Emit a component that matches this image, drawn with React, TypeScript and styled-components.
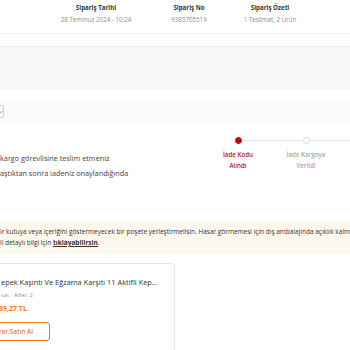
import React from 'react';
import styled, { createGlobalStyle } from 'styled-components';

const Global = createGlobalStyle`
  html, body { margin: 0; padding: 0; background: #fff; }
  body { font-family: "Open Sans", "Noto Sans", sans-serif; width: 350px; height: 350px; overflow: hidden; }
  * { box-sizing: border-box; }
`;

const Page = styled.div`
  width: 350px;
  height: 350px;
  overflow: hidden;
  display: flex;
  flex-direction: column;
  background: #fff;
`;

const Header = styled.div`
  height: 34px;
  flex: none;
  border-bottom: 1px solid #ececec;
  display: grid;
  grid-template-columns: 80px 106px 56px;
  padding: 2px 0 0 56px;
`;

const HeaderCell = styled.div`
  display: flex;
  flex-direction: column;
  align-items: center;
  white-space: nowrap;
  line-height: 11.5px;
`;

const HeaderLabel = styled.span`
  font-size: 6.2px;
  font-weight: 700;
  color: #333;
`;

const HeaderValue = styled.span`
  font-size: 6.2px;
  color: #8e8e8e;
`;

const Spacer = styled.div<{ $h: number }>`
  height: ${(p) => p.$h}px;
  flex: none;
`;

const GrayPanel = styled.div`
  height: 43px;
  flex: none;
  background: #f7f7f7;
  border-top: 1px solid #efefef;
`;

const FilterBar = styled.div`
  height: 23px;
  flex: none;
  background: #fafafa;
  display: flex;
  align-items: center;
`;

const SelectBox = styled.div`
  width: 34px;
  height: 13px;
  margin-left: -30px;
  border: 1px solid #cfcfcf;
  border-radius: 2px;
  display: flex;
  align-items: center;
  justify-content: flex-end;
  padding-right: 0.5px;
`;

const Content = styled.div`
  display: flex;
  height: 98px;
  flex: none;
  overflow: hidden;
`;

const LeftText = styled.div`
  width: 204px;
  flex: none;
  padding-top: 28px;
  font-size: 7.3px;
  line-height: 14.5px;
  color: #444;
  white-space: nowrap;
`;

const Stepper = styled.div`
  display: flex;
  padding-top: 14px;
`;

const Step = styled.div`
  width: 68px;
  flex: none;
  position: relative;
  display: flex;
  flex-direction: column;
  align-items: center;
  &::after {
    content: '';
    position: absolute;
    top: 3px;
    left: calc(50% + 4px);
    width: 60px;
    height: 1px;
    background: #e3e3e3;
  }
`;

const Dot = styled.div<{ $active?: boolean }>`
  width: 7px;
  height: 7px;
  border-radius: 50%;
  background: ${(p) => (p.$active ? '#b00f14' : '#fff')};
  border: 1px solid ${(p) => (p.$active ? '#b00f14' : '#d8d8d8')};
`;

const StepLabel = styled.div<{ $active?: boolean }>`
  margin-top: 5px;
  font-size: 6.2px;
  line-height: 11px;
  font-weight: 600;
  text-align: center;
  white-space: nowrap;
  color: ${(p) => (p.$active ? '#b3161c' : '#a8a8a8')};
`;

const Notice = styled.div`
  height: 32px;
  flex: none;
  background: #fdf8ee;
  padding-top: 5px;
  font-size: 6.5px;
  line-height: 11px;
  color: #333;
  white-space: nowrap;
  overflow: hidden;
`;

const NoticeLink = styled.a`
  font-weight: 700;
  color: #333;
  text-decoration: underline;
`;

const Card = styled.div`
  margin: 10px 0 0 -20px;
  width: 195px;
  height: 120px;
  flex: none;
  border: 1px solid #e8e8e8;
  border-radius: 3px;
  padding: 13px 0 0 20px;
  display: flex;
  flex-direction: column;
  align-items: flex-start;
`;

const Title = styled.div`
  font-size: 7.4px;
  line-height: 11px;
  color: #333;
  white-space: nowrap;
`;

const Meta = styled.div`
  margin-top: 2px;
  font-size: 5.8px;
  line-height: 11px;
  color: #9a9a9a;
`;

const Price = styled.div`
  margin: 2px 0 0 -2px;
  font-size: 7px;
  line-height: 11px;
  font-weight: 700;
  color: #f27a1a;
`;

const BuyButton = styled.button`
  margin: 8px 0 0 -24px;
  width: 73px;
  height: 19px;
  border: 1px solid #f27a1a;
  border-radius: 3px;
  background: #fff;
  color: #f27a1a;
  font-family: inherit;
  font-size: 6.4px;
  font-weight: 600;
  display: flex;
  align-items: center;
  justify-content: flex-start;
  padding: 0 0 0 10px;
  white-space: nowrap;
`;

export default function App() {
  return (
    <Page>
      <Global />
      <Header>
        <HeaderCell>
          <HeaderLabel>Sipariş Tarihi</HeaderLabel>
          <HeaderValue>28 Temmuz 2024 - 10:24</HeaderValue>
        </HeaderCell>
        <HeaderCell>
          <HeaderLabel>Sipariş No</HeaderLabel>
          <HeaderValue>9385705519</HeaderValue>
        </HeaderCell>
        <HeaderCell>
          <HeaderLabel>Sipariş Özeti</HeaderLabel>
          <HeaderValue>1 Teslimat, 2 Ürün</HeaderValue>
        </HeaderCell>
      </Header>
      <Spacer $h={12} />
      <GrayPanel />
      <Spacer $h={11} />
      <FilterBar>
        <SelectBox>
          <svg width="4" height="4" viewBox="0 0 4 4" fill="none" stroke="#888" strokeWidth="0.8">
            <path d="M0.5 1.2 L2 2.8 L3.5 1.2" />
          </svg>
        </SelectBox>
      </FilterBar>
      <Content>
        <LeftText>
          <div>kargo görevlisine teslim etmeniz</div>
          <div>aştıktan sonra iadeniz onaylandığında</div>
        </LeftText>
        <Stepper>
          <Step>
            <Dot $active />
            <StepLabel $active>
              İade Kodu
              <br />
              Alındı
            </StepLabel>
          </Step>
          <Step>
            <Dot />
            <StepLabel>
              İade Kargoya
              <br />
              Verildi
            </StepLabel>
          </Step>
        </Stepper>
      </Content>
      <Notice>
        <div>
          ir kutuya veya içeriğini göstermeyecek bir poşete yerleştirmelisin. Hasar görmemesi için dış ambalajında açıklık kalmamalı.
        </div>
        <div>
          li detaylı bilgi için <NoticeLink>tıklayabilirsin</NoticeLink>.
        </div>
      </Notice>
      <Card>
        <Title>epek Kaşıntı Ve Eğzama Karşıtı 11 Aktifli Kep...</Title>
        <Meta>sat - Adet: 2</Meta>
        <Price>39,27 TL</Price>
        <BuyButton>Tekrar Satın Al</BuyButton>
      </Card>
    </Page>
  );
}
